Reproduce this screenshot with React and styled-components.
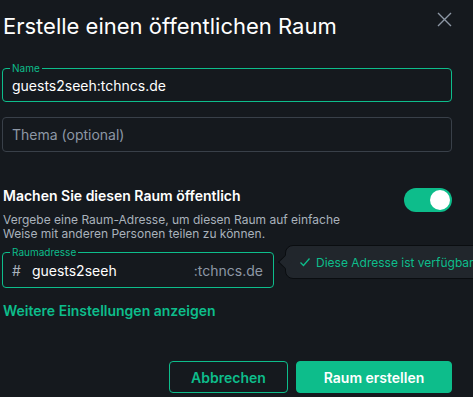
import React, { useState } from 'react'
import styled, { createGlobalStyle } from 'styled-components'

const GlobalStyle = createGlobalStyle`
  html, body {
    margin: 0;
    padding: 0;
    background: #15191e;
    overflow: hidden;
  }
  body {
    font-family: Inter, "Noto Sans", sans-serif;
    color: #ffffff;
  }
`

const Dialog = styled.div`
  width: 473px;
  height: 397px;
  box-sizing: border-box;
  padding: 0 21px 0 2px;
  display: flex;
  flex-direction: column;
`

const Header = styled.div`
  display: flex;
  justify-content: space-between;
  align-items: flex-start;
  height: 68px;
`

const Title = styled.h2`
  margin: 13px 0 0 1px;
  font-size: 22px;
  line-height: 26px;
  font-weight: 400;
  color: #ffffff;
`

const CloseButton = styled.button`
  margin: 12px 0 0 0;
  padding: 0;
  width: 15px;
  height: 15px;
  border: 0;
  background: transparent;
  color: #8d97a5;
  cursor: pointer;
  display: flex;
`

const Field = styled.div`
  position: relative;
  box-sizing: border-box;
  height: ${({ $h }) => $h || 34}px;
  width: ${({ $w }) => ($w ? `${$w}px` : '100%')};
  border: 1px solid ${({ $active }) => ($active ? '#0dbd8b' : '#394049')};
  border-radius: 4px;
  display: flex;
  align-items: center;
  padding: 0 10px 0 9px;
  margin-bottom: ${({ $mb }) => $mb || 0}px;
`

const FloatLabel = styled.span`
  position: absolute;
  left: 7px;
  top: -7px;
  padding: 0 2px;
  background: #15191e;
  color: #0dbd8b;
  font-size: 10px;
  line-height: 12px;
`

const Input = styled.input`
  flex: 1;
  min-width: 0;
  background: transparent;
  border: 0;
  outline: 0;
  padding: 0;
  font-family: inherit;
  font-size: 14px;
  color: #ffffff;
  caret-color: #ffffff;
  &::placeholder {
    color: #8d97a5;
  }
`

const Section = styled.div`
  display: flex;
  justify-content: space-between;
  align-items: flex-start;
  margin-top: 35px;
`

const SectionText = styled.div`
  display: flex;
  flex-direction: column;
  margin-left: 1px;
`

const SectionTitle = styled.div`
  font-size: 14px;
  line-height: 18px;
  font-weight: 600;
  color: #ffffff;
`

const Description = styled.p`
  margin: 8px 0 0 0;
  font-size: 12px;
  line-height: 14px;
  color: #a9b2bc;
`

const Toggle = styled.button`
  width: 48px;
  height: 24px;
  margin-top: 1px;
  border: 0;
  border-radius: 12px;
  background: ${({ $on }) => ($on ? '#0dbd8b' : '#394049')};
  padding: 2px;
  display: flex;
  justify-content: ${({ $on }) => ($on ? 'flex-end' : 'flex-start')};
  cursor: pointer;
`

const Knob = styled.span`
  width: 20px;
  height: 20px;
  border-radius: 50%;
  background: #ffffff;
`

const AddressRow = styled.div`
  position: relative;
  margin-top: 11px;
  display: flex;
`

const Hash = styled.span`
  color: #a9b2bc;
  font-size: 14px;
  margin-right: 11px;
`

const Suffix = styled.span`
  color: #8d97a5;
  font-size: 14px;
`

const Tooltip = styled.div`
  position: absolute;
  left: 283px;
  top: -7px;
  height: 34px;
  box-sizing: border-box;
  padding: 0 12px 0 13px;
  display: flex;
  align-items: center;
  gap: 5px;
  white-space: nowrap;
  background: #21262c;
  border: 1px solid #0a0d10;
  border-radius: 8px;
  color: #0dbd8b;
  font-size: 12px;
  &::before {
    content: '';
    position: absolute;
    left: -6px;
    top: 11px;
    width: 9px;
    height: 9px;
    background: #21262c;
    border-left: 1px solid #0a0d10;
    border-bottom: 1px solid #0a0d10;
    transform: rotate(45deg);
  }
`

const LinkButton = styled.button`
  align-self: flex-start;
  margin: 14px 0 0 1px;
  padding: 0;
  border: 0;
  background: transparent;
  color: #0dbd8b;
  font-family: inherit;
  font-size: 14px;
  font-weight: 600;
  cursor: pointer;
`

const Footer = styled.div`
  margin-top: auto;
  margin-bottom: 4px;
  display: flex;
  justify-content: flex-end;
  gap: 8px;
`

const Button = styled.button`
  box-sizing: border-box;
  height: 32px;
  width: ${({ $w }) => $w}px;
  border-radius: 4px;
  font-family: inherit;
  font-size: 14px;
  font-weight: 600;
  cursor: pointer;
  border: 1px solid #0dbd8b;
  background: ${({ $primary }) => ($primary ? '#0dbd8b' : 'transparent')};
  color: ${({ $primary }) => ($primary ? '#ffffff' : '#0dbd8b')};
`

const App = () => {
  const [isPublic, setIsPublic] = useState(true)
  const [name, setName] = useState('guests2seeh:tchncs.de')
  const [alias, setAlias] = useState('guests2seeh')

  return (
    <Dialog>
      <GlobalStyle />
      <Header>
        <Title>Erstelle einen öffentlichen Raum</Title>
        <CloseButton aria-label="Schließen">
          <svg width="15" height="15" viewBox="0 0 15 15" fill="none">
            <path d="M1 1L14 14M14 1L1 14" stroke="currentColor" strokeWidth="1.4" />
          </svg>
        </CloseButton>
      </Header>
      <Field $active $mb={15}>
        <FloatLabel>Name</FloatLabel>
        <Input value={name} onChange={(_e) => setName(_e.target.value)} />
      </Field>
      <Field $h={35}>
        <Input placeholder="Thema (optional)" />
      </Field>
      <Section>
        <SectionText>
          <SectionTitle>Machen Sie diesen Raum öffentlich</SectionTitle>
          <Description>
            Vergebe eine Raum-Adresse, um diesen Raum auf einfache
            <br />
            Weise mit anderen Personen teilen zu können.
          </Description>
        </SectionText>
        <Toggle $on={isPublic} onClick={() => setIsPublic(!isPublic)}>
          <Knob />
        </Toggle>
      </Section>
      <AddressRow>
        <Field $active $w={272} $h={36}>
          <FloatLabel>Raumadresse</FloatLabel>
          <Hash>#</Hash>
          <Input value={alias} onChange={(_e) => setAlias(_e.target.value)} />
          <Suffix>:tchncs.de</Suffix>
        </Field>
        <Tooltip>
          <svg width="12" height="12" viewBox="0 0 12 12" fill="none">
            <path d="M1.5 6.5L4.5 9.5L10.5 2.5" stroke="currentColor" strokeWidth="1.3" />
          </svg>
          Diese Adresse ist verfügbar
        </Tooltip>
      </AddressRow>
      <LinkButton>Weitere Einstellungen anzeigen</LinkButton>
      <Footer>
        <Button $w={119}>Abbrechen</Button>
        <Button $primary $w={156}>Raum erstellen</Button>
      </Footer>
    </Dialog>
  )
}

export default App
